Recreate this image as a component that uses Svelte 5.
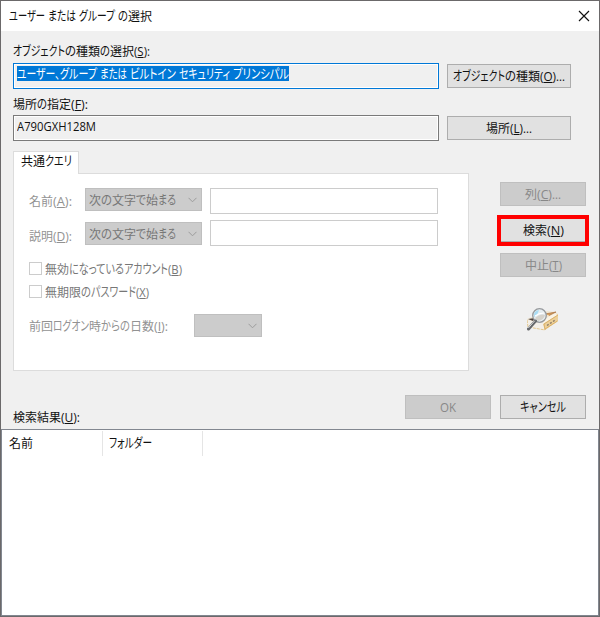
<script>
	// each run is [text, width in px]; '' is a plain gap
	const title = [['ユーザー', 36], ['', 3], ['または', 28], ['', 3], ['グループ', 36], ['', 3], ['の', 10], ['選択', 24]];
	const typeLabel = [['オブジェクト', 52], ['の', 11], ['種類', 24], ['の', 10], ['選択', 24], ['(S):', 16]];
	const typeValue = [['ユーザー、', 43], ['グループ', 37], ['', 3], ['または', 27], ['', 3], ['ビルトイン', 46], ['', 3], ['セキュリティ', 51], ['', 3], ['プリンシパル', 56]];
	const typeButton = [['オブジェクト', 52], ['の', 11], ['種類', 24], ['(O)', 16], ['...', 9]];
	const placeLabel = [['場所', 24], ['の', 10], ['指定', 24], ['(F):', 17]];
	const placeValue = [['A790GXH128M', 79]];
	const placeButton = [['場所', 24], ['(L)', 13], ['...', 9]];
	const tabText = [['共通', 24], ['クエリ', 27]];
	const startsWith = [['次', 12], ['の', 11], ['文字', 24], ['で', 10], ['始', 12], ['まる', 18]];
	const lastLogon = [['前回', 24], ['ログオン', 36], ['時', 12], ['からの', 29], ['日数', 24], ['(I):', 14]];
	const results = [['検索結果', 48], ['(U):', 19]];

	const rows = [
		{ name: [['名前', 24], ['(A):', 19]], top: 'first' },
		{ name: [['説明', 24], ['(D):', 19]], top: 'second' }
	];

	const checks = [
		[['無効', 24], ['になっている', 55], ['アカウント', 44], ['(B)', 14]],
		[['無期限', 36], ['の', 10], ['パスワード', 45], ['(X)', 13]]
	];

	const isKana = (text) => /^[\u3040-\u30ff]/.test(text);

	const fit = (node, width) => {
		const natural = node.getBoundingClientRect().width;
		node.style.transform = `scaleX(${width / natural})`;
	};
</script>

{#snippet label(runs)}
	<span class="label">
		{#each runs as [text, width]}
			<span class="run" style="width: {width}px">
				{#if text}
					<span class="glyphs" class:kana={isKana(text)} use:fit={width}>{#if text[0] === '('}(<u>{text[1]}</u>{text.slice(2)}{:else}{text}{/if}</span>
				{/if}
			</span>
		{/each}
	</span>
{/snippet}

{#snippet arrow()}
	<svg class="arrow" width="9" height="6" viewBox="0 0 9 6">
		<path d="M.5 .8 4.5 4.8 8.5 .8" fill="none" stroke="#9c9c9c" />
	</svg>
{/snippet}

<div class="window">
	<header>
		{@render label(title)}
		<svg class="close" width="12" height="12" viewBox="0 0 12 12">
			<path d="M1 1 11 11M11 1 1 11" stroke="#111" stroke-width="1.15" />
		</svg>
	</header>

	<main>
		<div class="caption">{@render label(typeLabel)}</div>
		<div class="field-row">
			<div class="field focus"><span class="selected">{@render label(typeValue)}</span></div>
			<button class="wide">{@render label(typeButton)}</button>
		</div>
		<div class="caption place">{@render label(placeLabel)}</div>
		<div class="field-row">
			<div class="field"><span class="value">{@render label(placeValue)}</span></div>
			<button class="wide">{@render label(placeButton)}</button>
		</div>

		<div class="query">
			<div class="tabs">
				<div class="tab">{@render label(tabText)}</div>
				<section class="panel">
					{#each rows as row}
						<div class="row {row.top}">
							<span class="name">{@render label(row.name)}</span>
							<div class="select">{@render label(startsWith)}{@render arrow()}</div>
							<div class="entry"></div>
						</div>
					{/each}
					<div class="checks">
						{#each checks as check}
							<div class="check"><span class="box"></span>{@render label(check)}</div>
						{/each}
					</div>
					<div class="days">
						{@render label(lastLogon)}
						<div class="select small">{@render arrow()}</div>
					</div>
				</section>
			</div>

			<aside>
				<button class="disabled">{@render label([['列', 12], ['(C)', 15], ['...', 9]])}</button>
				<div class="mark"><button>{@render label([['検索', 24], ['(N)', 17]])}</button></div>
				<button class="disabled">{@render label([['中止', 24], ['(T)', 13]])}</button>
				<svg class="search-icon" width="32" height="24" viewBox="0 0 32 24">
					<path d="M0 11 20 3 29 4 31 6 31 13 18 22 1 19Z" fill="#f0e6d2" />
					<path d="M0 12 17 14 18 22 1 19Z" fill="#f3efe8" />
					<path d="M0 12 1 19 18 22" fill="none" stroke="#e0c284" stroke-width=".9" stroke-dasharray="3 1" />
					<path d="M16 16 31 6 31 13 18 22Z" fill="#ecd09a" />
					<path d="M16 14 29 6" stroke="#faf3e4" stroke-width="3" />
					<path d="M20 17.5 29 11.5" stroke="#8c7c66" stroke-width="1.3" stroke-dasharray="2 1.6" />
					<path d="M18 21 30.5 13M17 16 31 7M17 16 18 22" stroke="#d9ae63" stroke-width=".9" fill="none" />
					<path d="M18 6 29 4 22 7.5" fill="#d9a05c" stroke="#a8703f" stroke-width=".7" />
					<path d="M1 11 8 10 6 13Z" fill="#50443f" />
					<circle cx="12.5" cy="7.5" r="6.8" fill="#e6edf0" stroke="#96999c" stroke-width="1.3" />
					<path d="M7 9Q6 3 12 2L10 7Z" fill="#a9dcf4" />
					<path d="M8 10Q13 5 18 7Q17 12 11 13Z" fill="#d5d2cb" />
					<path d="M8 8Q12 5 17 5" stroke="#fff" fill="none" stroke-width="1.2" />
					<path d="M8.5 13 1.5 21" stroke="#66686b" stroke-width="3" stroke-linecap="round" />
					<path d="M7.7 12.8 1.3 20" stroke="#d7d8d8" stroke-width="1" />
				</svg>
			</aside>
		</div>

		<footer>
			<span class="results">{@render label(results)}</span>
			<button class="disabled">{@render label([['OK', 16]])}</button>
			<button>{@render label([['キャンセル', 46]])}</button>
		</footer>
	</main>

	<div class="list">
		<div class="column">{@render label([['名前', 24]])}</div>
		<div class="column">{@render label([['フォルダー', 43]])}</div>
	</div>
</div>

<style>
	:global(body) {
		margin: 0;
	}

	.window {
		box-sizing: border-box;
		width: 600px;
		height: 617px;
		border: 1px solid #6b696a;
		background: #f0f0f0;
		color: #111;
		display: flex;
		flex-direction: column;
		font: 12px/16px 'Open Sans', 'Noto Sans CJK JP', sans-serif;
	}

	.window * {
		box-sizing: border-box;
	}

	.label {
		display: flex;
		height: 16px;
		flex-shrink: 0;
	}

	.run {
		display: block;
		height: 16px;
		white-space: nowrap;
	}

	.glyphs {
		display: block;
		width: max-content;
		height: 18px;
		line-height: 18px;
		transform-origin: left;
		font-feature-settings: 'palt';
	}

	/* larger glyphs on a shorter line keep the kana level with the kanji */
	.kana {
		height: 15px;
		font-size: 13px;
		line-height: 15px;
	}

	u {
		text-decoration-thickness: 1px;
		text-underline-offset: 1px;
	}

	header {
		height: 30px;
		padding: 0 9px 0 8px;
		background: #fff;
		display: flex;
		align-items: center;
		justify-content: space-between;
	}

	main {
		height: 398px;
		padding: 12px 10px 0 12px;
	}

	.caption {
		height: 20px;
	}

	.caption.place {
		height: 26px;
		padding-top: 7px;
	}

	.field-row {
		display: flex;
		align-items: center;
		gap: 8px;
	}

	.field {
		width: 426px;
		height: 26px;
		border: 1px solid #7a7a7a;
		box-shadow: inset 0 0 0 1px #fff;
		padding: 2px 3px;
	}

	.field.focus {
		border-color: #0078d7;
	}

	.selected {
		display: inline-block;
		height: 15px;
		background: #0078d7;
		color: #fff;
		vertical-align: top;
	}

	button {
		width: 86px;
		height: 24px;
		margin: 0;
		padding: 0;
		border: 1px solid #adadad;
		background: #e1e1e1;
		color: #111;
		font: inherit;
		display: flex;
		align-items: center;
		justify-content: center;
	}

	button.wide {
		width: 124px;
	}

	button.disabled {
		background: #ccc;
		border-color: #bfbfbf;
		color: #888;
	}

	.query {
		margin-top: 10px;
		height: 220px;
		display: flex;
	}

	.tabs {
		width: 456px;
	}

	.tab {
		position: relative;
		z-index: 1;
		width: 66px;
		height: 23px;
		padding: 1px 7px;
		background: #fff;
		border: 1px solid #dcdcdc;
		border-bottom: 0;
	}

	.panel {
		height: 198px;
		margin-top: -1px;
		padding: 14px 15px;
		border: 1px solid #dcdcdc;
		background: #fff;
		color: #929292;
	}

	.row {
		display: flex;
		height: 32px;
	}

	.name {
		width: 56px;
		padding-top: 5px;
	}

	.second .name {
		padding-top: 8px;
	}

	.second .select {
		margin-top: 2px;
	}

	.select {
		width: 117px;
		height: 23px;
		padding: 0 4px 0 3px;
		border: 1px solid #bfbfbf;
		background: #ccc;
		color: #777;
		display: flex;
		align-items: center;
		justify-content: space-between;
	}

	.entry {
		width: 228px;
		height: 26px;
		margin-left: 8px;
		border: 1px solid #ccc;
	}

	.checks {
		margin-top: 5px;
		color: #777;
	}

	.check {
		height: 23px;
		display: flex;
		align-items: center;
		gap: 3px;
	}

	.box {
		width: 13px;
		height: 13px;
		border: 1px solid #ccc;
	}

	.days {
		margin-top: 11px;
		display: flex;
		align-items: center;
	}

	.select.small {
		width: 68px;
		margin-left: 26px;
		justify-content: flex-end;
	}

	aside {
		width: 92px;
		margin-left: 28px;
		padding-top: 31px;
		display: flex;
		flex-direction: column;
		align-items: center;
	}

	.mark {
		width: 92px;
		height: 31px;
		margin: 9px 0 7px;
		border: 4px solid #f00;
		display: flex;
		justify-content: center;
		overflow: hidden;
	}

	.mark button {
		border-top: 0;
		height: 23px;
		flex-shrink: 0;
	}

	.search-icon {
		margin-top: 31px;
	}

	footer {
		display: flex;
		gap: 9px;
		margin-top: 24px;
	}

	.results {
		width: 383px;
		padding-top: 14px;
	}

	.list {
		flex: 1;
		border: 1px solid #828790;
		background: #fff;
		display: flex;
	}

	.column {
		width: 100px;
		height: 25px;
		margin-top: 1px;
		padding: 4px 6px;
		border-right: 1px solid #e5e5e5;
	}

	.column:first-child {
		width: 101px;
		padding-left: 7px;
	}
</style>
